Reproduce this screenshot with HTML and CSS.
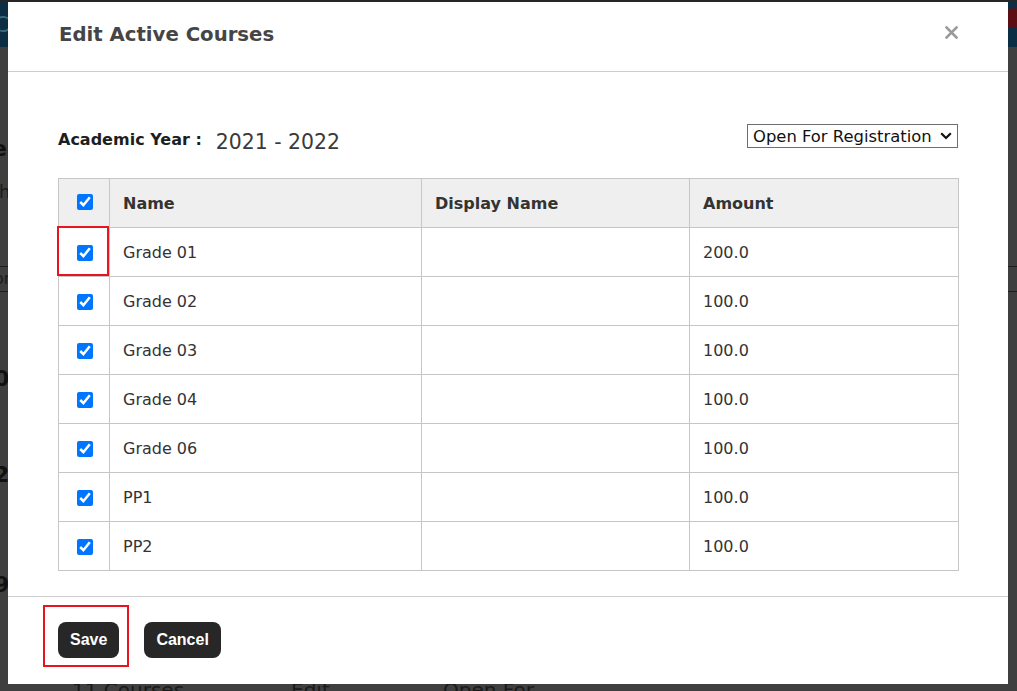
FILE: index.html
```html
<!DOCTYPE html>
<html lang="en">
<head>
<meta charset="utf-8">
<title>Edit Active Courses</title>
<link rel="stylesheet" href="styles.css">
</head>
<body>
<div class="page">
  <div class="topline"></div>
  <header class="nav">
    <span class="nav-brand">C</span>
    <span class="nav-avatar"></span>
  </header>
  <main class="page-main">
    <div class="bg-title">ea</div>
    <div class="bg-sub">th</div>
    <div class="bg-tabs">or</div>
    <div class="bg-stat first">0</div>
    <div class="bg-stat">2</div>
    <div class="bg-stat last">9</div>
    <div class="bg-row"><span>11 Courses</span><span>Edit</span><span>Open For</span></div>
  </main>
</div>

<div class="modal" role="dialog" aria-labelledby="modal-title">
  <div class="modal-header">
    <h4 class="modal-title" id="modal-title">Edit Active Courses</h4>
    <button class="close" type="button" aria-label="Close">
      <svg width="13" height="13" viewBox="0 0 13 13"><path d="M1.5 1.5 L11.5 11.5 M11.5 1.5 L1.5 11.5" stroke="#9a9a9a" stroke-width="2.6" stroke-linecap="square" fill="none"/></svg>
    </button>
  </div>
  <div class="modal-body">
    <div class="year-row">
      <div class="year-info">
        <span class="year-label">Academic Year :</span>
        <span class="year-value">2021 - 2022</span>
      </div>
      <div class="select-wrap">
        <select class="status-select">
          <option>Open For Registration</option>
          <option>Closed</option>
        </select>
        <svg class="chev" width="12" height="8" viewBox="0 0 12 8"><path d="M1.2 1.2 L6 6 L10.8 1.2" stroke="#111" stroke-width="2.2" fill="none"/></svg>
      </div>
    </div>
    <table class="courses">
      <colgroup>
        <col class="c1"><col class="c2"><col class="c3"><col class="c4">
      </colgroup>
      <thead>
        <tr><th class="cell-check"><input type="checkbox" checked></th><th>Name</th><th>Display Name</th><th>Amount</th></tr>
      </thead>
      <tbody>
        <tr><td class="cell-check"><span class="mark-cb"><input type="checkbox" checked></span></td><td>Grade 01</td><td></td><td>200.0</td></tr>
        <tr><td class="cell-check"><input type="checkbox" checked></td><td>Grade 02</td><td></td><td>100.0</td></tr>
        <tr><td class="cell-check"><input type="checkbox" checked></td><td>Grade 03</td><td></td><td>100.0</td></tr>
        <tr><td class="cell-check"><input type="checkbox" checked></td><td>Grade 04</td><td></td><td>100.0</td></tr>
        <tr><td class="cell-check"><input type="checkbox" checked></td><td>Grade 06</td><td></td><td>100.0</td></tr>
        <tr><td class="cell-check"><input type="checkbox" checked></td><td>PP1</td><td></td><td>100.0</td></tr>
        <tr><td class="cell-check"><input type="checkbox" checked></td><td>PP2</td><td></td><td>100.0</td></tr>
      </tbody>
    </table>
  </div>
  <div class="modal-footer">
    <span class="mark-btn"><button class="btn" type="button">Save</button></span>
    <button class="btn" type="button">Cancel</button>
  </div>
</div>
</body>
</html>
```

FILE: styles.css
```css
*, *::before, *::after { box-sizing: border-box; }

html, body {
  margin: 0;
  height: 100%;
}

body {
  position: relative;
  overflow: hidden;
  background: #3f3f3f;
  font-family: "DejaVu Sans", Verdana, sans-serif;
}

/* ---------- dimmed page behind the dialog ---------- */
.topline {
  height: 2px;
  background: #262626;
}

.nav {
  height: 45px;
  background: #0c2e44;
  display: flex;
  justify-content: space-between;
  align-items: flex-start;
}

.nav-brand {
  color: #3b6a80;
  font-size: 22px;
  line-height: 24px;
  margin: 11px 0 0 -6px;
}

.nav-avatar {
  width: 20px;
  height: 20px;
  border-radius: 50%;
  background: #5c0e14;
  margin: 6px -6px 0 0;
}

.page-main {
  color: #111;
}

.bg-title {
  font-size: 22px;
  font-weight: bold;
  margin: 90px 0 0 -8px;
  line-height: 24px;
}

.bg-sub {
  font-size: 18px;
  color: #1c1c1c;
  margin: 20px 0 0 -8px;
  line-height: 22px;
}

.bg-tabs {
  margin-top: 63px;
  border-top: 1px solid #1e1e1e;
  border-bottom: 1px solid #1e1e1e;
  height: 26px;
  font-size: 16px;
  line-height: 24px;
  text-indent: -6px;
  color: #1c1c1c;
}

.bg-stat {
  font-size: 22px;
  font-weight: bold;
  line-height: 24px;
  margin-top: 72px;
  text-indent: -6px;
}

.bg-stat.first {
  margin-top: 75px;
}

.bg-stat.last {
  margin-top: 86px;
}

.bg-row {
  display: grid;
  grid-template-columns: 219px 152px 200px;
  padding-left: 72px;
  margin-top: 81px;
  font-size: 20px;
  line-height: 24px;
  color: #1a1a1a;
}

/* ---------- dialog ---------- */
.modal {
  position: absolute;
  top: 2px;
  left: 8px;
  width: 1000px;
  height: 682px;
  background: #fff;
  display: flex;
  flex-direction: column;
}

.modal-header {
  height: 70px;
  flex: none;
  border-bottom: 1px solid #cdcdcd;
  padding: 21px 50px 0 51px;
  display: flex;
  justify-content: space-between;
  align-items: flex-start;
}

.modal-title {
  margin: 0;
  font-size: 19.7px;
  line-height: 24px;
  font-weight: bold;
  color: #454545;
}

.close {
  margin-top: 3px;
  width: 13px;
  height: 13px;
  padding: 0;
  border: 0;
  background: none;
  display: block;
}

.close svg { display: block; }

.modal-body {
  flex: none;
  padding: 52px 50px 25px;
}

.year-row {
  display: flex;
  justify-content: space-between;
  align-items: flex-start;
  height: 24px;
  margin-bottom: 30px;
}

.year-info {
  display: flex;
  align-items: flex-start;
  padding-top: 6px;
}

.year-label {
  font-size: 16px;
  line-height: 20px;
  font-weight: bold;
  color: #1e1e1e;
}

.year-value {
  font-size: 20.4px;
  line-height: 24px;
  color: #3a3a3a;
  margin-left: 14px;
}

.select-wrap {
  position: relative;
  width: 211px;
  height: 24px;
}

.status-select {
  appearance: none;
  -webkit-appearance: none;
  display: block;
  width: 100%;
  height: 100%;
  margin: 0;
  padding: 0 0 0 5px;
  border: 1px solid #6f6f6f;
  border-radius: 0;
  background: #fff;
  font-family: "DejaVu Sans", Verdana, sans-serif;
  font-size: 16.4px;
  color: #111;
}

.chev {
  position: absolute;
  right: 6px;
  top: 8px;
  pointer-events: none;
}

.courses {
  width: 900px;
  border-collapse: collapse;
  table-layout: fixed;
  color: #333;
  font-size: 16px;
}

.c1 { width: 51px; }
.c2 { width: 312px; }
.c3 { width: 268px; }
.c4 { width: 269px; }

.courses th,
.courses td {
  border: 1px solid #c6c6c6;
  height: 49px;
  padding: 0 13px;
  text-align: left;
  vertical-align: middle;
}

.courses thead th {
  background: #efefef;
  font-weight: bold;
  color: #333;
}

.courses .cell-check {
  padding: 0 0 0 2px;
  text-align: center;
}

.courses input[type="checkbox"] {
  width: 16px;
  height: 16px;
  margin: 0;
  vertical-align: middle;
  accent-color: #0075ff;
}

.courses thead input[type="checkbox"] {
  position: relative;
  top: -2px;
}

.mark-cb {
  position: relative;
  display: inline-block;
  width: 16px;
  height: 16px;
  vertical-align: middle;
}

.mark-cb input { display: block; }

.mark-cb::after {
  content: "";
  position: absolute;
  left: -20px;
  top: -19px;
  width: 52px;
  height: 50px;
  border: 2px solid #e8141e;
  pointer-events: none;
}

.modal-footer {
  flex: none;
  border-top: 1px solid #cdcdcd;
  padding: 25px 50px 0;
  display: flex;
  align-items: flex-start;
  gap: 25px;
}

.btn {
  display: block;
  height: 36px;
  padding: 0 12px;
  border: 0;
  border-radius: 8px;
  background: #272727;
  color: #fff;
  font-family: "Liberation Sans", Arial, sans-serif;
  font-weight: bold;
  font-size: 16px;
}

.mark-btn {
  position: relative;
  display: block;
}

.mark-btn::after {
  content: "";
  position: absolute;
  left: -15px;
  top: -17px;
  width: 86px;
  height: 62px;
  border: 2px solid #e8141e;
  pointer-events: none;
}
```
